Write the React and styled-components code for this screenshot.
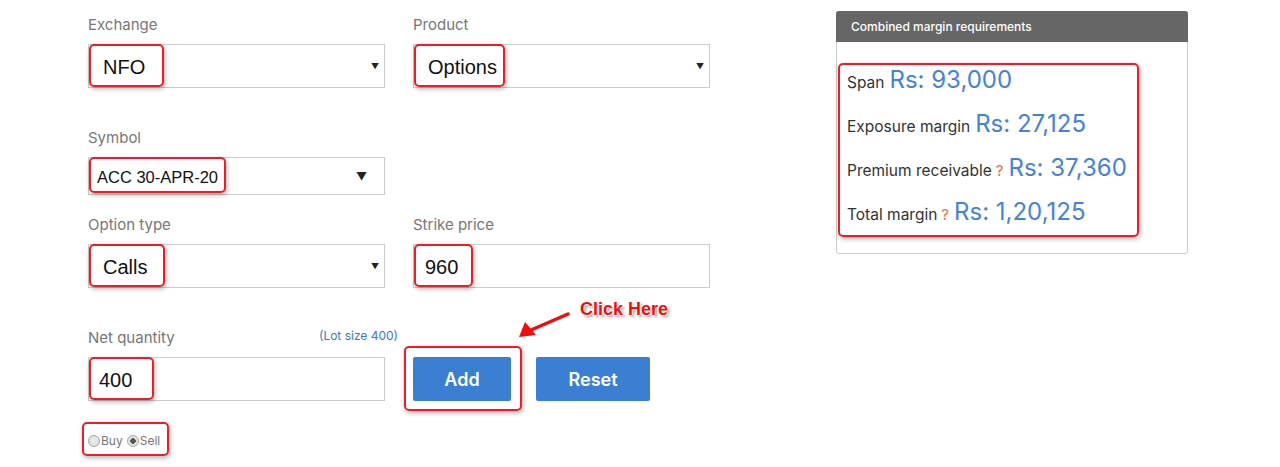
import React from "react";
import styled, { createGlobalStyle } from "styled-components";

const Global = createGlobalStyle`
  html, body { margin: 0; padding: 0; background: #fff; }
  body { font-family: Inter, "Noto Sans", sans-serif; color: #333; }
  * { box-sizing: border-box; }
`;

const Page = styled.div`
  position: relative;
  display: flex;
  align-items: flex-start;
  width: 1280px;
  height: 467px;
  padding-left: 88px;
  overflow: hidden;
`;

const Form = styled.div`
  display: grid;
  grid-template-columns: 297px 297px;
  column-gap: 28px;
  padding-top: 15px;
`;

const Field = styled.div`
  display: flex;
  flex-direction: column;
  margin-top: ${(p) => p.$top || 0}px;
`;

const LabelRow = styled.div`
  display: flex;
  justify-content: space-between;
  align-items: flex-start;
  height: 20px;
  margin-bottom: 9px;
`;

const Label = styled.label`
  font-size: 15px;
  line-height: 20px;
  color: #777;
`;

const LotSize = styled.span`
  font-size: 12px;
  line-height: 16px;
  color: #3580c0;
  margin-right: -13px;
`;

const Control = styled.div`
  display: flex;
  align-items: flex-start;
  height: ${(p) => (p.$compact ? 38 : 44)}px;
  border: 1px solid #ccc;
  background: #fff;
`;

const Highlight = styled.span`
  display: inline-flex;
  align-items: center;
  border: 2px solid #ee1c24;
  border-radius: 5px;
  box-shadow: 1px 2px 5px rgba(0, 0, 0, 0.3);
`;

const Value = styled(Highlight)`
  width: ${(p) => p.$w}px;
  height: ${(p) => (p.$compact ? 36 : 43)}px;
  margin-top: -1px;
  padding: 4px 0 0 ${(p) => p.$pl}px;
  font-family: "Liberation Sans", Arial, sans-serif;
  font-size: ${(p) => (p.$compact ? 16.5 : 20)}px;
  color: #111;
  white-space: nowrap;
`;

const Caret = styled.span`
  margin-left: auto;
  align-self: center;
  margin-right: ${(p) => (p.$compact ? 17 : 5)}px;
  font-size: ${(p) => (p.$compact ? 11 : 8)}px;
  color: #222;
  line-height: 1;
`;

const ButtonCell = styled.div`
  align-self: end;
  display: flex;
  align-items: center;
  gap: 14px;
`;

const ButtonFrame = styled(Highlight)`
  padding: 9px 9px 8px 7px;
  margin: -11px 0 -10px -9px;
`;

const Button = styled.button`
  height: 44px;
  width: ${(p) => p.$w}px;
  border: none;
  border-radius: 2px;
  background: #3a7fd1;
  color: #fff;
  font-family: Inter, "Noto Sans", sans-serif;
  font-size: 18px;
  font-weight: 600;
  cursor: pointer;
`;

const RadioFrame = styled(Highlight)`
  margin: 21px 0 0 -6px;
  height: 34px;
  width: 87px;
  padding: 3px 0 0 4px;
  gap: 4px;
`;

const RadioOption = styled.span`
  display: inline-flex;
  align-items: center;
  font-size: 12px;
  color: #777;
`;

const RadioDot = styled.span`
  width: 12px;
  height: 12px;
  border-radius: 50%;
  border: 1px solid #a8a8a8;
  background: radial-gradient(circle, ${(p) => (p.$on ? "#555 0 2.5px, #e4e4e4 3px" : "#ececec 0, #dcdcdc 100%")});
  margin-right: 1px;
`;

const Panel = styled.div`
  margin-left: 126px;
  margin-top: 11px;
  width: 352px;
  border: 1px solid #ccc;
  border-radius: 3px;
`;

const PanelHeader = styled.div`
  height: 31px;
  margin: -1px -1px 0;
  background: #666;
  border-radius: 3px 3px 0 0;
  color: #fff;
  font-size: 12px;
  font-weight: 500;
  line-height: 31px;
  padding-left: 15px;
`;

const PanelBody = styled.div`
  padding: 21px 0 16px 1px;
`;

const MarginBox = styled(Highlight)`
  display: flex;
  flex-direction: column;
  align-items: flex-start;
  width: 301px;
  padding: 0 0 8px 7px;
  gap: 14px;
`;

const MarginRow = styled.div`
  display: flex;
  align-items: baseline;
  height: 30px;
  line-height: 30px;
  gap: 5px;
`;

const MarginLabel = styled.span`
  font-size: 15.5px;
  color: #333;
`;

const Help = styled.span`
  font-size: 15px;
  color: #f26b3a;
  margin-left: -1px;
`;

const Amount = styled.span`
  font-size: 24px;
  color: #4383d6;
`;

const Callout = styled.div`
  position: absolute;
  left: 515px;
  top: 298px;
  width: 170px;
  height: 45px;
`;

const CalloutText = styled.span`
  position: absolute;
  left: 65px;
  top: 1px;
  font-family: "Liberation Sans", Arial, sans-serif;
  font-weight: bold;
  font-size: 18px;
  color: #f50b0b;
  text-shadow: 1px 0 0 #fff, -1px 0 0 #fff, 0 1px 0 #fff, 0 -1px 0 #fff,
    2px 2px 3px rgba(0, 0, 0, 0.45);
`;

const CalloutArrow = styled.svg`
  position: absolute;
  left: 0;
  top: 10px;
  overflow: visible;
`;

function Select({ label, value, w, pl, top }) {
  return (
    <Field $top={top}>
      <LabelRow>
        <Label>{label}</Label>
      </LabelRow>
      <Control>
        <Value $w={w} $pl={pl}>{value}</Value>
        <Caret>▼</Caret>
      </Control>
    </Field>
  );
}

function Input({ label, value, extra, top, w, pl }) {
  return (
    <Field $top={top}>
      <LabelRow>
        <Label>{label}</Label>
        {extra}
      </LabelRow>
      <Control>
        <Value $w={w} $pl={pl}>{value}</Value>
      </Control>
    </Field>
  );
}

const margins = [
  { label: "Span", amount: "Rs: 93,000" },
  { label: "Exposure margin", amount: "Rs: 27,125" },
  { label: "Premium receivable", amount: "Rs: 37,360", help: true },
  { label: "Total margin", amount: "Rs: 1,20,125", help: true },
];

export default function App() {
  return (
    <>
      <Global />
      <Page>
        <Form>
          <Select label="Exchange" value="NFO" w={75} pl={12} />
          <Select label="Product" value="Options" w={91} pl={12} />
          <Field $top={40}>
            <LabelRow>
              <Label>Symbol</Label>
            </LabelRow>
            <Control $compact>
              <Value $compact $w={137} $pl={6}>ACC 30-APR-20</Value>
              <Caret $compact>▼</Caret>
            </Control>
          </Field>
          <div />
          <Select label="Option type" value="Calls" w={76} pl={12} top={20} />
          <Input label="Strike price" value="960" top={20} w={59} pl={9} />
          <Input
            label="Net quantity"
            value="400"
            top={40}
            w={65}
            pl={8}
            extra={<LotSize>(Lot size 400)</LotSize>}
          />
          <ButtonCell>
            <ButtonFrame>
              <Button $w={98}>Add</Button>
            </ButtonFrame>
            <Button $w={114}>Reset</Button>
          </ButtonCell>
          <div>
            <RadioFrame>
              <RadioOption>
                <RadioDot />
                Buy
              </RadioOption>
              <RadioOption>
                <RadioDot $on />
                Sell
              </RadioOption>
            </RadioFrame>
          </div>
        </Form>
        <Panel>
          <PanelHeader>Combined margin requirements</PanelHeader>
          <PanelBody>
            <MarginBox>
              {margins.map((m) => (
                <MarginRow key={m.label}>
                  <MarginLabel>{m.label}</MarginLabel>
                  {m.help && <Help>?</Help>}
                  <Amount>{m.amount}</Amount>
                </MarginRow>
              ))}
            </MarginBox>
          </PanelBody>
        </Panel>
        <Callout>
          <CalloutText>Click Here</CalloutText>
          <CalloutArrow width="60" height="35">
            <line x1="53" y1="6" x2="16" y2="22" stroke="#f50b0b" strokeWidth="3.5" strokeLinecap="round" />
            <polygon points="4,29 10,14 21,27" fill="#f50b0b" />
          </CalloutArrow>
        </Callout>
      </Page>
    </>
  );
}
